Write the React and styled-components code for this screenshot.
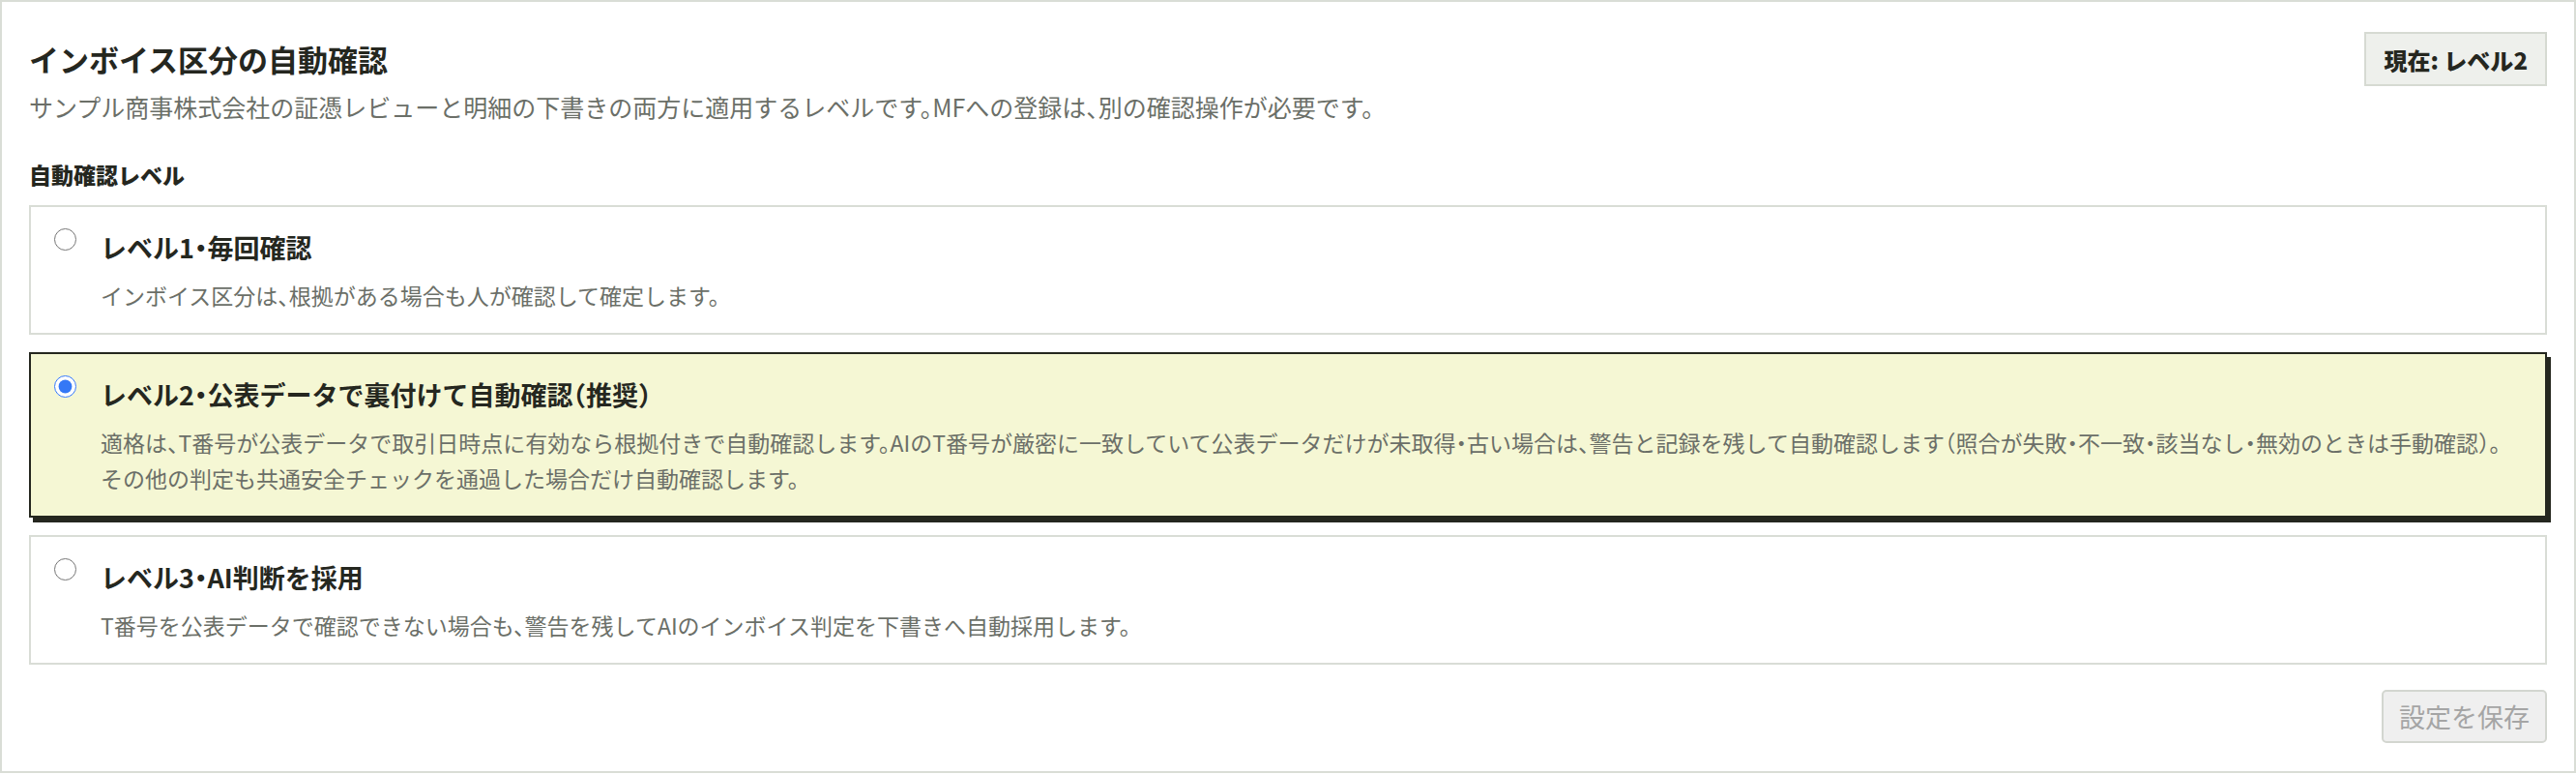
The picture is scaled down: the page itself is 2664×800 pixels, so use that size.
import { useState } from "react";
import styled, { createGlobalStyle } from "styled-components";

const GlobalStyle = createGlobalStyle`
  * { box-sizing: border-box; }
  html, body {
    margin: 0;
    padding: 0;
    background: #ffffff;
  }
  body {
    font-family: "Noto Sans CJK JP", "Noto Sans", sans-serif;
    color: #25271f;
    font-feature-settings: "halt";
  }
`;

const Panel = styled.section`
  border: 2px solid #d9ddd6;
  background: #ffffff;
  padding: 31px 28px 29px;
`;

const HeaderRow = styled.div`
  display: flex;
  align-items: center;
  justify-content: space-between;
  height: 56px;
`;

const Title = styled.h2`
  margin: 0;
  font-size: 31px;
  font-weight: 700;
  line-height: 44px;
`;

const Badge = styled.div`
  display: flex;
  align-items: center;
  height: 56px;
  padding: 0 18px;
  border: 2px solid #d6dad2;
  background: #eef0ec;
  font-size: 24px;
  font-weight: 800;
  white-space: nowrap;
`;

const Subtitle = styled.p`
  margin: 3px 0 0;
  font-size: 25px;
  line-height: 36px;
  color: #6b6f68;
`;

const FieldLabel = styled.div`
  margin-top: 36px;
  font-size: 23px;
  font-weight: 900;
  line-height: 32px;
`;

const OptionList = styled.div`
  display: flex;
  flex-direction: column;
  gap: 18px;
  margin-top: 16px;
`;

const OptionCard = styled.label`
  display: flex;
  align-items: flex-start;
  gap: 25px;
  padding: 24px 8px 20px 24px;
  border: 2px solid ${(p) => (p.$selected ? "#25271f" : "#d9ddd6")};
  background: ${(p) => (p.$selected ? "#f5f7d4" : "#ffffff")};
  box-shadow: ${(p) => (p.$selected ? "4px 5px 0 #25271f" : "none")};
  cursor: pointer;
`;

const Radio = styled.input`
  flex-shrink: 0;
  width: 23px;
  height: 23px;
  margin: -2px 0 0;
  accent-color: #3478f6;
  cursor: pointer;
`;

const OptionBody = styled.div`
  flex: 1;
  min-width: 0;
`;

const OptionTitle = styled.div`
  font-size: 27px;
  font-weight: 700;
  line-height: 36px;
`;

const OptionDesc = styled.p`
  margin: 13px 0 0;
  font-size: 23px;
  line-height: 37px;
  color: #6b6f68;
`;

const Footer = styled.div`
  display: flex;
  justify-content: flex-end;
  margin-top: 26px;
`;

const SaveButton = styled.button`
  height: 55px;
  padding: 0 16px;
  border: 2px solid #d3d6d0;
  border-radius: 5px;
  background: #efefef;
  color: #a5a5a5;
  font-family: inherit;
  font-size: 27px;
  cursor: pointer;

  &:enabled {
    background: #25271f;
    border-color: #25271f;
    color: #ffffff;
  }
  &:disabled {
    cursor: default;
  }
`;

const levels = [
  {
    id: 1,
    title: "レベル1・毎回確認",
    lines: ["インボイス区分は、根拠がある場合も人が確認して確定します。"],
  },
  {
    id: 2,
    title: "レベル2・公表データで裏付けて自動確認（推奨）",
    lines: [
      "適格は、T番号が公表データで取引日時点に有効なら根拠付きで自動確認します。AIのT番号が厳密に一致していて公表データだけが未取得・古い場合は、警告と記録を残して自動確認します（照合が失敗・不一致・該当なし・無効のときは手動確認）。",
      "その他の判定も共通安全チェックを通過した場合だけ自動確認します。",
    ],
  },
  {
    id: 3,
    title: "レベル3・AI判断を採用",
    lines: ["T番号を公表データで確認できない場合も、警告を残してAIのインボイス判定を下書きへ自動採用します。"],
  },
];

const App = () => {
  const [saved, setSaved] = useState(2);
  const [selected, setSelected] = useState(2);

  return (
    <>
      <GlobalStyle />
      <Panel>
        <HeaderRow>
          <Title>インボイス区分の自動確認</Title>
          <Badge>現在: レベル{saved}</Badge>
        </HeaderRow>
        <Subtitle>
          サンプル商事株式会社の証憑レビューと明細の下書きの両方に適用するレベルです。MFへの登録は、別の確認操作が必要です。
        </Subtitle>
        <FieldLabel>自動確認レベル</FieldLabel>
        <OptionList>
          {levels.map((level) => (
            <OptionCard key={level.id} $selected={selected === level.id}>
              <Radio
                type="radio"
                name="auto-level"
                checked={selected === level.id}
                onChange={() => setSelected(level.id)}
              />
              <OptionBody>
                <OptionTitle>{level.title}</OptionTitle>
                <OptionDesc>
                  {level.lines.map((line, i) => (
                    <span key={i}>
                      {i > 0 && <br />}
                      {line}
                    </span>
                  ))}
                </OptionDesc>
              </OptionBody>
            </OptionCard>
          ))}
        </OptionList>
        <Footer>
          <SaveButton disabled={selected === saved} onClick={() => setSaved(selected)}>
            設定を保存
          </SaveButton>
        </Footer>
      </Panel>
    </>
  );
};

export default App;
